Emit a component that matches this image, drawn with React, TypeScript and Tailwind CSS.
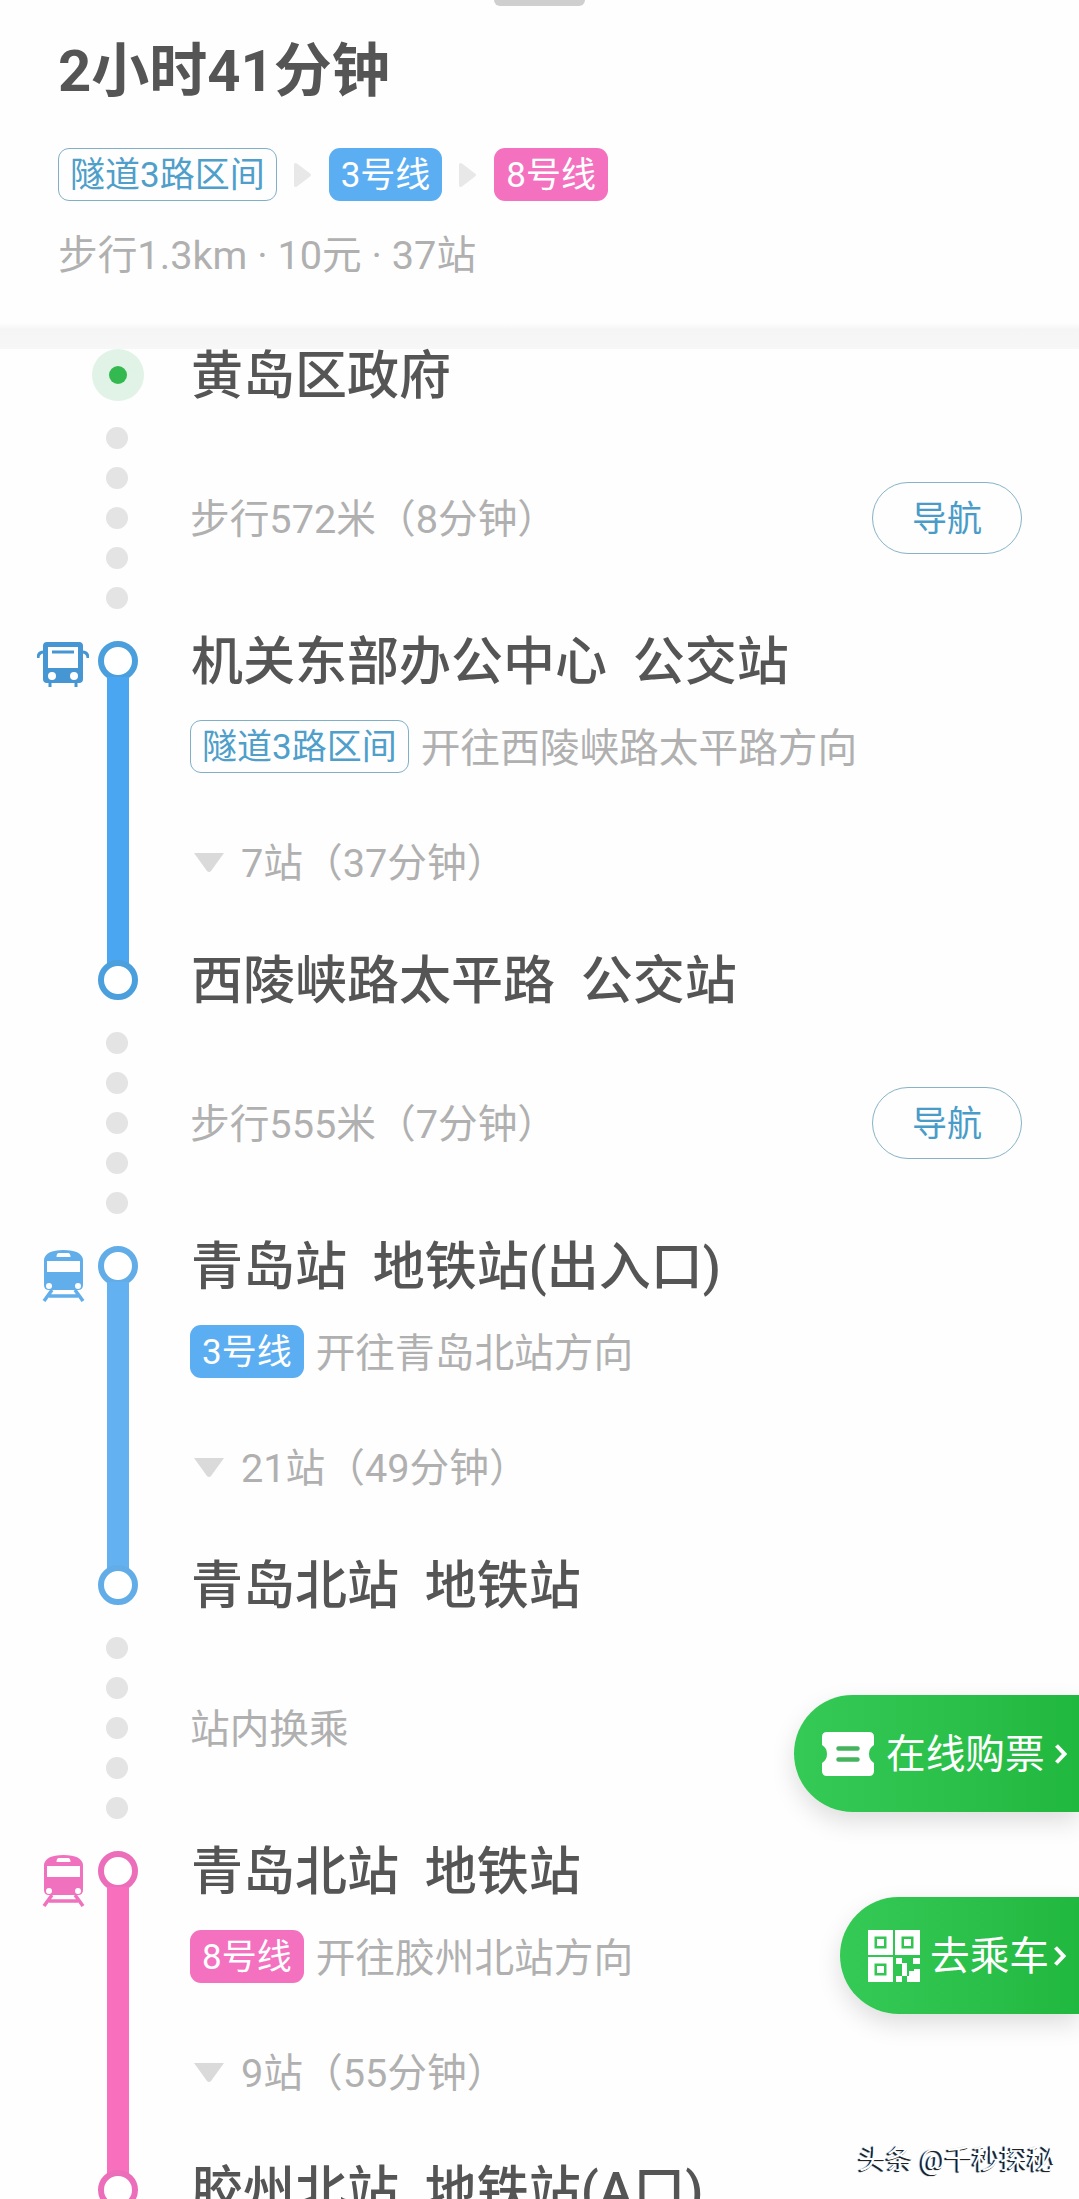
import type { ReactNode } from 'react';
import clsx from 'clsx';

type LineTone = 'bus' | 'blue' | 'pink';

interface Ride {
  tone: LineTone;
  line: string;
  from: string;
  to: string;
  direction: string;
  stops: string;
}

const rides: Ride[] = [
  {
    tone: 'bus',
    line: '隧道3路区间',
    from: '机关东部办公中心  公交站',
    to: '西陵峡路太平路  公交站',
    direction: '开往西陵峡路太平路方向',
    stops: '7站（37分钟）',
  },
  {
    tone: 'blue',
    line: '3号线',
    from: '青岛站  地铁站(出入口)',
    to: '青岛北站  地铁站',
    direction: '开往青岛北站方向',
    stops: '21站（49分钟）',
  },
  {
    tone: 'pink',
    line: '8号线',
    from: '青岛北站  地铁站',
    to: '胶州北站  地铁站(A口)',
    direction: '开往胶州北站方向',
    stops: '9站（55分钟）',
  },
];

const ringTone: Record<LineTone, string> = {
  bus: 'border-[#4b9fdc]',
  blue: 'border-[#62ade8]',
  pink: 'border-[#ec6dba]',
};

const barTone: Record<LineTone, string> = {
  bus: 'bg-[#4ba6f2]',
  blue: 'bg-[#63b1f1]',
  pink: 'bg-[#f86fbd]',
};

const iconTone: Record<LineTone, string> = {
  bus: 'text-[#4596d2]',
  blue: 'text-[#62aeea]',
  pink: 'text-[#f071bd]',
};

function LineChip({ tone, children }: { tone: LineTone; children: ReactNode }) {
  return (
    <span
      className={clsx(
        'flex h-[53px] shrink-0 items-center rounded-[11px] pt-0.5 text-[35px] leading-none whitespace-nowrap',
        tone === 'bus' && 'border border-[#7fb0c8] px-[11px] text-[#4f9fca]',
        tone === 'blue' && 'bg-[#5caef2] px-3 text-white',
        tone === 'pink' && 'bg-[#f471bf] px-3 text-white'
      )}
    >
      {children}
    </span>
  );
}

function ChipArrow() {
  return (
    <svg className="mr-[18px] ml-[17px] h-6 w-[17px] shrink-0 text-[#e8e8e8]" viewBox="0 0 17 24" fill="currentColor">
      <path d="M3 0.500L16 10.500Q18 12 16 13.500L3 23.500Q0 25 0 22V2Q0 -1 3 0.500Z" />
    </svg>
  );
}

function BusIcon() {
  return (
    <svg className="h-[47px] w-[52px]" viewBox="0 0 52 47" fill="none">
      <path
        fill="currentColor"
        fillRule="evenodd"
        d="M10 1H42Q46 1 46 5V38Q46 42 42 42H10Q6 42 6 38V5Q6 1 10 1ZM11 6V27H41V6ZM15 31A4 4 0 1 0 15 39A4 4 0 1 0 15 31ZM37 31A4 4 0 1 0 37 39A4 4 0 1 0 37 31Z"
      />
      <path d="M15 11H37" stroke="currentColor" strokeWidth="3" />
      <path d="M13 41V46M39 41V46" stroke="currentColor" strokeWidth="3" />
      <path d="M7 11Q1 11 1 17M45 11Q51 11 51 17" stroke="currentColor" strokeWidth="3" />
    </svg>
  );
}

function TrainIcon() {
  return (
    <svg className="h-[53px] w-[43px]" viewBox="0 0 43 53" fill="none">
      <path
        fill="currentColor"
        fillRule="evenodd"
        d="M2 11Q3 1 21.500 1Q40 1 41 11V36Q41 41 36 41H7Q2 41 2 36ZM17 4Q14.500 4 14.500 8H28.500Q28.500 4 26 4ZM5 12V23H38V12ZM7 34A3 3 0 1 0 7 40A3 3 0 1 0 7 34ZM36 34A3 3 0 1 0 36 40A3 3 0 1 0 36 34Z"
      />
      <path d="M10 41L2 52M33 41L41 52M7 47H36" stroke="currentColor" strokeWidth="3.500" />
    </svg>
  );
}

function TicketIcon() {
  return (
    <svg className="h-11 w-[52px] shrink-0" viewBox="0 0 52 44" fill="none">
      <path
        fill="#fff"
        d="M5 0H47Q52 0 52 5V13Q47 16 47 22Q47 28 52 31V39Q52 44 47 44H5Q0 44 0 39V31Q5 28 5 22Q5 16 0 13V5Q0 0 5 0Z"
      />
      <path d="M16.500 16.500H35.500M16.500 27.500H35.500" stroke="#45b45f" strokeWidth="4.500" strokeLinecap="round" />
    </svg>
  );
}

function QrIcon() {
  return (
    <svg className="size-[52px] shrink-0" viewBox="0 0 52 52" fill="#fff">
      <path
        fillRule="evenodd"
        d="M0 0H25V25H0ZM6.500 6.500V18.500H18.500V6.500ZM27 0H52V25H27ZM33.500 6.500V18.500H45.500V6.500ZM0 27H25V52H0ZM6.500 33.500V45.500H18.500V33.500Z"
      />
      <path d="M9 9H16V16H9ZM36 9H43V16H36ZM9 36H16V43H9Z" />
      <path d="M28 28H34V34H28ZM34 33H39V40H34ZM45 28H52V34H45ZM28 46H34V52H28ZM34 40H39V46H34ZM39 46H52V52H39ZM46 39H52V46H46ZM41 41H46V46H41Z" />
    </svg>
  );
}

function Chevron() {
  return (
    <svg className="h-5 w-3 shrink-0" viewBox="0 0 12 20" fill="none" stroke="#fff" strokeWidth="4">
      <path d="M1.500 1.500L9.500 10L1.500 18.500" />
    </svg>
  );
}

function StationName({ children }: { children: ReactNode }) {
  return (
    <h2 className="flex h-10 items-center pt-1 text-[52px] leading-none font-medium whitespace-pre text-[#555]">
      {children}
    </h2>
  );
}

function WalkRow({ text, canNavigate = false }: { text: string; canNavigate?: boolean }) {
  return (
    <div className="flex h-[246px] items-center pr-[57px] pl-[106px]">
      <div className="mr-[62px] flex flex-col gap-[18px]">
        {[0, 1, 2, 3, 4].map((dot) => (
          <span key={dot} className="size-[22px] rounded-full bg-[#e4e4e4]" />
        ))}
      </div>
      <span className="flex-1 pt-1 text-[39.7px] leading-none text-[#b0b0b0]">{text}</span>
      {canNavigate && (
        <button className="h-[72px] w-[150px] rounded-full border border-[#86b3c6] pt-0.5 text-[35px] leading-none text-[#4a9cc8]">
          导航
        </button>
      )}
    </div>
  );
}

function RideRow({ ride }: { ride: Ride }) {
  const ring = clsx('size-10 shrink-0 rounded-full border-[6px] bg-white', ringTone[ride.tone]);

  return (
    <div className="flex h-[359px]">
      <div className={clsx('flex w-[98px] justify-end', iconTone[ride.tone])}>
        <div className="flex w-[70px] justify-center">
          {ride.tone === 'bus' ? <BusIcon /> : <span className="mt-[3px]"><TrainIcon /></span>}
        </div>
      </div>
      <div className="flex w-10 flex-col items-center">
        <span className={ring} />
        <span className={clsx('-my-1 w-[22px] flex-1', barTone[ride.tone])} />
        <span className={ring} />
      </div>
      <div className="ml-[53px]">
        <StationName>{ride.from}</StationName>
        <div className="mt-[39px] -ml-px flex h-[53px] items-center gap-3">
          <LineChip tone={ride.tone}>{ride.line}</LineChip>
          <span className="pt-1 text-[39.7px] leading-none text-[#b0b0b0]">{ride.direction}</span>
        </div>
        <div className="mt-[63px] flex h-[52px] items-center text-[39.7px] leading-none text-[#b0b0b0]">
          <svg className="mr-[17px] ml-[3px] h-[19px] w-[30px] text-[#dadada]" viewBox="0 0 30 19" fill="currentColor">
            <path d="M0 0H30L17 18Q15 20 13 18Z" />
          </svg>
          <span className="pt-[3px]">{ride.stops}</span>
        </div>
        <div className="mt-[72px]">
          <StationName>{ride.to}</StationName>
        </div>
      </div>
    </div>
  );
}

export default function App() {
  return (
    <main className="relative h-[2199px] w-[1079px] overflow-hidden bg-[#fefefe] font-[Roboto,'Noto_Sans_CJK_SC',sans-serif]">
      <header className="h-[323px] px-[58px]">
        <div className="mx-auto h-1.5 w-[91px] rounded-b-md bg-[#cfcfcf]" />
        <h1 className="mt-9 text-[58px] leading-[58px] font-bold text-[#555]">2小时41分钟</h1>
        <div className="mt-12 flex items-center">
          <LineChip tone="bus">隧道3路区间</LineChip>
          <ChipArrow />
          <LineChip tone="blue">3号线</LineChip>
          <ChipArrow />
          <LineChip tone="pink">8号线</LineChip>
        </div>
        <p className="mt-[35px] text-[39.7px] leading-10 text-[#b0b0b0]">步行1.3km · 10元 · 37站</p>
      </header>
      <div className="h-[26px] bg-linear-to-b from-[#fefefe] via-[#f5f5f5] via-25% to-[#f7f7f7]" />

      <section className="pt-[5px]">
        <div className="flex h-[41px] items-center pl-[92px]">
          <span className="mr-[47px] flex size-[52px] shrink-0 items-center justify-center rounded-full bg-[#e1f3e6]">
            <span className="size-[18px] rounded-full bg-[#33b950]" />
          </span>
          <StationName>黄岛区政府</StationName>
        </div>
        <WalkRow text="步行572米（8分钟）" canNavigate />
        <RideRow ride={rides[0]} />
        <WalkRow text="步行555米（7分钟）" canNavigate />
        <RideRow ride={rides[1]} />
        <WalkRow text="站内换乘" />
        <RideRow ride={rides[2]} />
      </section>

      {/* Floating shortcuts docked to the right edge */}
      <button className="absolute top-[1695px] right-0 flex h-[117px] w-[285px] items-center rounded-l-full bg-linear-to-r from-[#35ca56] to-[#21b83f] pl-7 text-[39.7px] leading-none whitespace-nowrap text-white shadow-[0_10px_24px_rgba(0,0,0,0.13)]">
        <TicketIcon />
        <span className="mr-2.5 ml-3 pt-0.5">在线购票</span>
        <Chevron />
      </button>
      <button className="absolute top-[1897px] right-0 flex h-[117px] w-[239px] items-center rounded-l-full bg-linear-to-r from-[#35ca56] to-[#21b83f] pl-7 text-[39.7px] leading-none whitespace-nowrap text-white shadow-[0_10px_24px_rgba(0,0,0,0.13)]">
        <QrIcon />
        <span className="mr-[5px] ml-2.5 pt-0.5">去乘车</span>
        <Chevron />
      </button>

      <span className="absolute top-[2146px] right-[24px] text-[27.5px] leading-7 whitespace-nowrap text-white [text-shadow:-1px_1px_0_#222,-2px_1px_1px_#000]">
        头条 @千秒探秘
      </span>
    </main>
  );
}
